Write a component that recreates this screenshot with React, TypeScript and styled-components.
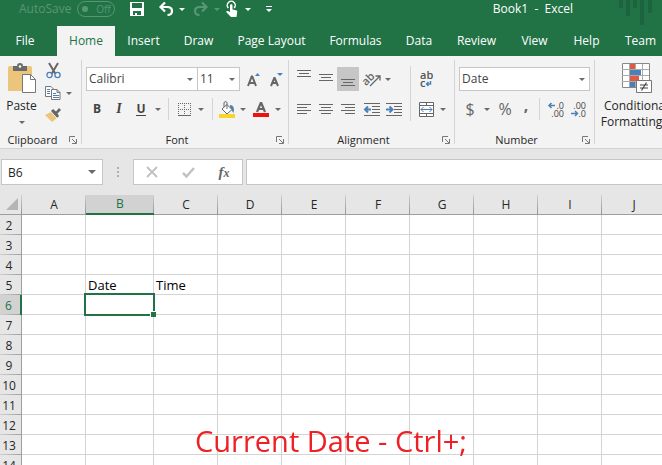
import React from "react";
import styled, { createGlobalStyle } from "styled-components";

const GREEN = "#217346";
const INK = "#262626";
const ICON = "#6a6a6a";
const BLUE = "#4a82b8";

const GlobalStyle = createGlobalStyle`
  *, *::before, *::after { box-sizing: border-box; }
  html, body { margin: 0; height: 100%; overflow: hidden; }
  body, button, input, select {
    font-family: "Open Sans", "Noto Sans", sans-serif;
    font-size: 12px;
    line-height: 16px;
    color: ${INK};
  }
  button {
    display: inline-flex;
    align-items: center;
    justify-content: center;
    padding: 0;
    border: 0;
    background: none;
  }
  svg { display: block; flex: none; overflow: visible; }
`;

const Window = styled.div`
  display: flex;
  flex-direction: column;
  height: 100vh;
  overflow: hidden;
  background: #fff;
`;

/* ---------- title bar ---------- */

const TitleBar = styled.header`
  display: flex;
  flex: none;
  height: 26px;
  padding-left: 19px;
  background: ${GREEN};
  color: #fff;
`;

const TitleTools = styled.div`
  display: flex;
  align-items: center;
  height: 18px;
`;

const AutoSave = styled.label`
  display: flex;
  align-items: center;
  gap: 6px;
  width: 107px;
  color: #5a9673;
`;

const Toggle = styled.button`
  gap: 8px;
  width: 38px;
  height: 16px;
  border: 1px solid #5a9673;
  border-radius: 8px;
  color: #5a9673;
  font-size: 10px;

  &::before {
    content: "";
    width: 6px;
    height: 6px;
    border-radius: 50%;
    background: #5a9673;
  }
`;

const ToolButton = styled.button<{ $w?: number; $active?: boolean; $bold?: boolean }>`
  flex: none;
  width: ${(p) => p.$w ?? 22}px;
  height: 24px;
  background: ${(p) => (p.$active ? "#c6c6c6" : "none")};
  color: #444;
  font-weight: ${(p) => (p.$bold ? 700 : 400)};
`;

const Title = styled.h1`
  flex: 1;
  margin: 0 45px 0 0;
  font-size: 12px;
  font-weight: 400;
  line-height: 18px;
  text-align: right;
  white-space: pre;
`;

/* ---------- tabs ---------- */

const Tabs = styled.nav`
  display: flex;
  flex: none;
  height: 30px;
  overflow: hidden;
  background: ${GREEN};
`;

const Tab = styled.button<{ $w: number; $active?: boolean; $first?: boolean }>`
  flex: none;
  width: ${(p) => p.$w}px;
  margin-right: ${(p) => (p.$first ? 7 : 0)}px;
  background: ${(p) => (p.$active ? "#f3f3f3" : "transparent")};
  color: ${(p) => (p.$active ? GREEN : "#fff")};
  white-space: nowrap;
`;

/* ---------- ribbon ---------- */

const Ribbon = styled.div`
  display: flex;
  flex: none;
  height: 93px;
  padding-top: 4px;
  overflow: hidden;
  border-bottom: 1px solid #d2d2d2;
  background: #f3f3f3;
`;

const Group = styled.section<{ $w: number }>`
  display: flex;
  flex: none;
  flex-direction: column;
  justify-content: space-between;
  width: ${(p) => p.$w}px;
`;

const Divider = styled.span`
  flex: none;
  width: 1px;
  height: 84px;
  background: #d4d4d4;
`;

const GroupBody = styled.div<{ $stack?: boolean }>`
  display: flex;
  flex-direction: ${(p) => (p.$stack ? "column" : "row")};
  gap: ${(p) => (p.$stack ? 6 : 0)}px;
  padding: ${(p) => (p.$stack ? "7px 4px 0" : "0")};
`;

const GroupFooter = styled.footer`
  display: grid;
  grid-template-columns: 1fr 16px;
  align-items: center;
  height: 16px;
`;

const GroupTitle = styled.h2`
  margin: 0;
  font-size: 11px;
  font-weight: 400;
  line-height: 16px;
  text-align: center;
`;

const Launcher = styled.button`
  height: 16px;
`;

const Row = styled.div`
  display: flex;
  align-items: center;
  height: 24px;
`;

const BigButton = styled.button<{ $w: number }>`
  flex: none;
  flex-direction: column;
  justify-content: flex-start;
  width: ${(p) => p.$w}px;
  height: 70px;
  padding-top: 3px;
  white-space: nowrap;

  & > svg { margin-bottom: 4px; }
`;

const ButtonLine = styled.span`
  display: flex;
  align-items: center;
  gap: 3px;
  height: 16px;
`;

const SmallButtons = styled.div`
  display: flex;
  flex-direction: column;
  padding-left: 2px;
`;

const SmallRow = styled.div`
  display: flex;
  height: 22px;

  & > button { height: 22px; }
`;

const Separator = styled.span<{ $gap: number }>`
  flex: none;
  width: 1px;
  height: 22px;
  margin: 0 ${(p) => p.$gap}px;
  background: #d4d4d4;
`;

const TallSeparator = styled.span`
  flex: none;
  width: 1px;
  height: 55px;
  margin: 6px 0 0 3px;
  background: #d4d4d4;
`;

const Combo = styled.label<{ $w: number; $joined?: boolean }>`
  display: grid;
  flex: none;
  align-items: center;
  width: ${(p) => p.$w}px;
  height: 24px;
  margin-left: ${(p) => (p.$joined ? -1 : 0)}px;
  border: 1px solid #c6c6c6;
  background: #fff;

  & > * { grid-area: 1 / 1; }
  & > svg {
    justify-self: end;
    margin-right: 4px;
    pointer-events: none;
  }
`;

const Select = styled.select`
  width: 100%;
  height: 22px;
  padding: 0 2px;
  border: 0;
  appearance: none;
  background: transparent;
  color: #444;
`;

const Underlined = styled.span`
  border-bottom: 1px solid #444;
  line-height: 13px;
`;

const Italic = styled.span`
  font-family: "Liberation Serif", serif;
  font-size: 14px;
  font-style: italic;
`;

const Sign = styled.span<{ $raised?: boolean }>`
  padding-bottom: ${(p) => (p.$raised ? 8 : 0)}px;
  color: #666;
  font-size: 16px;
`;

/* ---------- formula bar ---------- */

const FormulaBar = styled.div`
  display: flex;
  flex: none;
  align-items: center;
  height: 46px;
  padding-left: 1px;
  background: #e6e6e6;
`;

const BarBox = styled.div<{ $w?: number }>`
  display: flex;
  flex: ${(p) => (p.$w ? "none" : "1")};
  align-items: center;
  width: ${(p) => (p.$w ? `${p.$w}px` : "auto")};
  height: 26px;
  border: 1px solid #c6c6c6;
  background: #fff;
`;

const FormulaBox = styled(BarBox)`
  border-right: 0;
`;

const BarInput = styled.input`
  flex: 1;
  min-width: 0;
  height: 24px;
  padding: 0 6px;
  border: 0;
  outline: 0;
  background: transparent;
`;

const Grip = styled.span`
  display: flex;
  flex: none;
  flex-direction: column;
  align-items: center;
  gap: 2px;
  width: 30px;

  & > i {
    width: 2px;
    height: 2px;
    background: #b0b0b0;
  }
`;

const Gap = styled.span<{ $w: number }>`
  flex: none;
  width: ${(p) => p.$w}px;
`;

const FxLabel = styled.span`
  color: #666;
  font-family: "Liberation Serif", serif;
  font-size: 15px;
  font-style: italic;
  font-weight: 700;

  & > small { font-size: 12px; }
`;

/* ---------- sheet ---------- */

const SheetArea = styled.main`
  flex: 1;
  min-height: 0;
  overflow: hidden;
`;

const Sheet = styled.table`
  width: 666px;
  table-layout: fixed;
  border-collapse: separate;
  border-spacing: 0;
  font-size: 13px;
`;

const Col = styled.col<{ $w: number }>`
  width: ${(p) => p.$w}px;
`;

const Corner = styled.td`
  height: 20px;
  padding: 0 4px 2px 0;
  border-bottom: 1px solid #9b9f9e;
  background: linear-gradient(#d0d0d0, #8f9795) right / 1px 100% no-repeat #e6e6e6;

  & > svg { margin-left: auto; }
`;

const ColumnHead = styled.th<{ $active: boolean }>`
  height: 20px;
  padding: 0;
  border-bottom: ${(p) => (p.$active ? `2px solid ${GREEN}` : "1px solid #9b9f9e")};
  background: linear-gradient(#d0d0d0, #8f9795) right / 1px 100% no-repeat
    ${(p) => (p.$active ? "#d2d2d2" : "#e6e6e6")};
  color: ${(p) => (p.$active ? GREEN : INK)};
  font-size: 12px;
  font-weight: 400;
  line-height: 16px;
`;

const RowHead = styled.th<{ $active: boolean }>`
  height: 20px;
  padding: 2px 3px 0 0;
  border-right: ${(p) => (p.$active ? `2px solid ${GREEN}` : "1px solid #9b9f9e")};
  background: linear-gradient(90deg, #d0d0d0, #9b9f9e) bottom / 100% 1px no-repeat
    ${(p) => (p.$active ? "#d2d2d2" : "#e6e6e6")};
  color: ${(p) => (p.$active ? GREEN : INK)};
  font-size: 12px;
  font-weight: 400;
  line-height: 16px;
`;

const Cell = styled.td`
  position: relative;
  height: 20px;
  padding: 0 2px;
  border-right: 1px solid #d4d4d4;
  border-bottom: 1px solid #d4d4d4;
  color: #000;
  line-height: 18px;
  white-space: nowrap;
`;

const Selection = styled.span`
  position: absolute;
  z-index: 1;
  inset: -2px;
  border: 2px solid ${GREEN};

  &::after {
    content: "";
    position: absolute;
    right: -3px;
    bottom: -3px;
    width: 6px;
    height: 6px;
    border: solid #fff;
    border-width: 1px 0 0 1px;
    background: ${GREEN};
  }
`;

const Caption = styled.p`
  position: fixed;
  z-index: 2;
  right: 0;
  bottom: 4px;
  left: 0;
  margin: 0;
  color: #ed2024;
  font-size: 29px;
  line-height: 40px;
  text-align: center;
`;

/* ---------- icons ---------- */

const Caret = ({ color = ICON, w = 6, h = 3 }: { color?: string; w?: number; h?: number }) => (
  <svg width={w} height={h} viewBox="0 0 6 3" preserveAspectRatio="none" fill={color}>
    <path d="M0 0h6L3 3z" />
  </svg>
);

const SaveIcon = () => (
  <svg width="14" height="14" viewBox="0 0 14 14">
    <path fill="#fff" fillRule="evenodd" d="M0 0h14v14H0zM2 1v5h10V1zM3 9v4h2v-2h2v2h4V9z" />
  </svg>
);

const UndoIcon = ({ redo = false }: { redo?: boolean }) => (
  <svg width="14" height="14" viewBox="0 0 14 14" fill="none" stroke={redo ? "#5a9673" : "#fff"} strokeWidth="2.200">
    <g transform={redo ? "translate(14 0) scale(-1 1)" : undefined}>
      <path d="M6 .5 1.500 5 6 9.500M2 5h6c3.200 0 5 1.500 5 4s-1.800 4-4.500 4" />
    </g>
  </svg>
);

const TouchIcon = () => (
  <svg width="12" height="16" viewBox="0 0 12 16">
    <path d="M2.300 7A4 4 0 1 1 8.200 7" fill="none" stroke="#fff" strokeWidth="1.500" />
    <path fill="#fff" d="M4 4.500c0-1.600 2.500-1.600 2.500 0v4L10 9.300c1 .3 1.400 1 1.200 2L10.500 16H5L.4 11.300c-.5-1 .5-1.700 1.400-1.200L4 11z" />
  </svg>
);

const CustomizeIcon = () => (
  <svg width="6" height="7" viewBox="0 0 6 7" fill="#fff">
    <path d="M0 0h6v1H0zM0 3h6L3 6z" />
  </svg>
);

const TitleArt = () => (
  <svg width="44" height="26" viewBox="0 0 44 26" fill="#1c6340" shapeRendering="crispEdges">
    <path d="M1 0h4v8H1zM8 0h4v16H8zM15 0h4v8h-4zM22 0h4v25h-4zM30 0h4v13h-4z" />
  </svg>
);

const PasteIcon = () => (
  <svg width="28" height="31" viewBox="0 0 28 31">
    <path fill="#ebc57c" d="M2 3h20q2 0 2 2v23H0V5q0-2 2-2z" />
    <path fill="#6a6a6a" d="M5 3h4q0-3 3-3t3 3h4v5H5z" />
    <circle cx="12" cy="3.500" r="1.300" fill="#fff" />
    <path fill="#fff" stroke="#777" d="M14.500 11.500h8l5 5v13h-13z" />
    <path fill="none" stroke="#777" d="M22.500 11.500v5h5" />
  </svg>
);

const CutIcon = () => (
  <svg width="15" height="16" viewBox="0 0 15 16" fill="none">
    <path d="m3 0 6.500 11M12 0 5.500 11" stroke="#666" strokeWidth="2" />
    <circle cx="3.500" cy="12" r="2.600" stroke={BLUE} strokeWidth="1.300" />
    <circle cx="11.500" cy="12" r="2.600" stroke={BLUE} strokeWidth="1.300" />
  </svg>
);

const CopyIcon = () => (
  <svg width="16" height="14" viewBox="0 0 16 14">
    <path fill="#fff" stroke="#777" d="M.5.5H6L8.500 3v7.500h-8z" />
    <path stroke={BLUE} d="M2 3.500h3M2 5.500h3M2 7.500h3" />
    <path fill="#fff" stroke="#777" d="M6.500 3.500h5.500l3 3v7H6.500z" />
    <path fill="none" stroke="#777" d="M12 3.500v3h3" />
    <path stroke={BLUE} d="M8 7.500h3M8 9.500h6M8 11.500h6" />
  </svg>
);

const BrushIcon = () => (
  <svg width="16" height="14" viewBox="0 0 16 14">
    <path fill="#ebc57c" d="M0 7 6 4l6 6-5 4z" />
    <path fill="#666" d="m6 3 2-2 3 2.500L14 0l2 2-3.500 3.500L14 8l-2 2z" />
    <path stroke="#f3f3f3" d="m6 4 6 6" />
  </svg>
);

const LauncherIcon = () => (
  <svg width="8" height="8" viewBox="0 0 8 8" fill="none" stroke="#777">
    <path d="M.5 6V.5H6M3 3l4 4M7.500 3v4.500H3" />
  </svg>
);

const FontSizeIcon = ({ down = false }: { down?: boolean }) => (
  <svg width="13" height="15" viewBox="0 0 13 15" fill="none">
    <path
      d={down ? "m1 14 3.300-8h.4L8 14M2.500 11h4" : "M1 14 4.700 4.500h.6L9 14M2.500 11h5"}
      stroke="#666"
      strokeWidth="2"
    />
    <path fill={BLUE} d={down ? "M7 1h6l-3 3z" : "M8 4h5l-2.500-3z"} />
  </svg>
);

const BordersIcon = () => (
  <svg width="13" height="13" viewBox="0 0 13 13" fill="none" stroke="#666" shapeRendering="crispEdges">
    <path strokeDasharray="1 1" d="M0 .5h13M0 6.500h13M.5 0v12M6.500 0v12M12.500 0v12" />
    <path d="M0 12.500h13" />
  </svg>
);

const FillIcon = () => (
  <svg width="16" height="17" viewBox="0 0 16 17">
    <path fill={BLUE} d="M11 4c4 0 4.500 4 3.500 8-1-1-2-4-3.500-4z" />
    <path fill="#fff" stroke="#666" d="m8 3.500 5 5-5 4.500-5-5z" />
    <path fill="none" stroke="#666" d="M5 6V1.500q2-2 3 0V8" />
    <path fill="#f8d42c" d="M0 13h16v4H0z" />
  </svg>
);

const FontColorIcon = () => (
  <svg width="16" height="16" viewBox="0 0 16 16">
    <path fill="none" stroke="#666" strokeWidth="2.200" d="M4 11 7.700 2h.6L12 11M5.500 8h5" />
    <path fill="#f01010" d="M0 12h16v4H0z" />
  </svg>
);

/* Each entry is one stroke of the icon: [x, y, length]. */
type Stroke = [number, number, number];

const LinesIcon = ({ strokes }: { strokes: Stroke[] }) => (
  <svg width="14" height="18" viewBox="0 0 14 18" fill="#666" shapeRendering="crispEdges">
    {strokes.map(([x, y, w]) => (
      <rect key={y} x={x} y={y} width={w} height="1" />
    ))}
  </svg>
);

const ALIGN_TOP: Stroke[] = [[0, 0, 14], [2, 3, 10], [0, 6, 14]];
const ALIGN_MIDDLE: Stroke[] = [[0, 4, 14], [2, 7, 10], [0, 10, 14]];
const ALIGN_BOTTOM: Stroke[] = [[0, 9, 14], [2, 12, 10], [0, 15, 14]];
const ALIGN_LEFT: Stroke[] = [[0, 4, 14], [0, 7, 10], [0, 10, 14], [0, 13, 10]];
const ALIGN_CENTER: Stroke[] = [[0, 4, 14], [2, 7, 10], [0, 10, 14], [2, 13, 10]];
const ALIGN_RIGHT: Stroke[] = [[0, 4, 14], [4, 7, 10], [0, 10, 14], [4, 13, 10]];

const IndentIcon = ({ right = false }: { right?: boolean }) => (
  <svg width="16" height="13" viewBox="0 0 16 13">
    <path stroke="#666" shapeRendering="crispEdges" d="M0 .5h16M8 3.500h8M8 6.500h8M8 9.500h8M0 12.500h16" />
    <path
      fill="none"
      stroke={BLUE}
      strokeWidth="2"
      d={right ? "M0 6.500h6M3.500 3.500l3 3-3 3" : "M7 6.500H1M4 3.500l-3 3 3 3"}
    />
  </svg>
);

const OrientationIcon = () => (
  <svg width="17" height="16" viewBox="0 0 17 16">
    <text x="-2" y="12" transform="rotate(-45 4 9)" fontSize="11" fontWeight="600" fill="#666">ab</text>
    <path fill="none" stroke="#666" strokeWidth="1.300" d="M6 15 15.500 5.500M11.500 5H16v4.500" />
  </svg>
);

const WrapIcon = () => (
  <svg width="14" height="17" viewBox="0 0 14 17">
    <text x="1" y="8" fontSize="11" fontWeight="600" fill="#555">ab</text>
    <text x="1" y="16" fontSize="11" fontWeight="600" fill="#555">c</text>
    <path fill="none" stroke={BLUE} strokeWidth="1.500" d="M11.500 10v3H8M9.500 11l-2 2 2 2" />
  </svg>
);

const MergeIcon = () => (
  <svg width="15" height="15" viewBox="0 0 15 15">
    <path fill="#fff" stroke="#666" d="M.5.5h14v14H.5zM.5 3.500h14M.5 11.500h14M7.500.5v3M7.500 11.500v3" />
    <path fill="none" stroke={BLUE} d="M2 7.500h11M4.500 5 2 7.500 4.500 10M10.500 5 13 7.500 10.500 10" />
  </svg>
);

const DecimalIcon = ({ decrease = false }: { decrease?: boolean }) => (
  <svg width="17" height="15" viewBox="0 0 17 15" fontSize="9" fill="#444">
    <text x="16" y="7" textAnchor="end">{decrease ? ".00" : ".0"}</text>
    <text x="16" y="15" textAnchor="end">{decrease ? ".0" : ".00"}</text>
    <path
      fill="none"
      stroke={BLUE}
      strokeWidth="1.500"
      d={decrease ? "M1 11.500h6M5 9l2.500 2.500L5 14" : "M7 3.500H1M3.500 1 1 3.500 3.500 6"}
    />
  </svg>
);

const ConditionalIcon = () => (
  <svg width="31" height="31" viewBox="0 0 31 31">
    <path fill="#fff" stroke="#888" d="M1.500.5h27v24h-27z" />
    <path fill="none" stroke="#aaa" d="M8.500 1v23M14.500 1v23M21.500 1v23M1 6.500h27M1 12.500h27M1 18.500h27" />
    <path fill="#e05a43" d="M9 1h5v5H9zM9 13h9v5H9z" />
    <path fill={BLUE} d="M9 7h11v5H9zM9 19h5v5H9z" />
    <path fill="#fff" stroke="#777" d="M15.500 17.500h15v12h-15z" />
    <path stroke="#444" strokeWidth="1.200" d="M19 22h8M19 25h8M25.500 19.500l-5 8" />
  </svg>
);

const CancelIcon = () => (
  <svg width="12" height="10" viewBox="0 0 12 10" fill="none" stroke="#c2c2c2" strokeWidth="2">
    <path d="m1 0 10 10M11 0 1 10" />
  </svg>
);

const EnterIcon = () => (
  <svg width="13" height="11" viewBox="0 0 13 11" fill="none" stroke="#c2c2c2" strokeWidth="2.500">
    <path d="m1 6 3.500 3.500L12 1" />
  </svg>
);

/* ---------- data ---------- */

const TABS: [string, number][] = [
  ["File", 50],
  ["Home", 58],
  ["Insert", 57],
  ["Draw", 53],
  ["Page Layout", 93],
  ["Formulas", 75],
  ["Data", 52],
  ["Review", 63],
  ["View", 53],
  ["Help", 51],
  ["Team", 57],
];

const COLUMNS = ["A", "B", "C", "D", "E", "F", "G", "H", "I", "J"];
const ROWS = [2, 3, 4, 5, 6, 7, 8, 9, 10, 11, 12, 13, 14];
const CELLS: Record<string, string> = { B5: "Date", C5: "Time" };
const ACTIVE = { column: "B", row: 6 };

const Footer = ({ title }: { title: string }) => (
  <GroupFooter>
    <GroupTitle>{title}</GroupTitle>
    <Launcher aria-label={`${title} settings`}>
      <LauncherIcon />
    </Launcher>
  </GroupFooter>
);

export default function App() {
  return (
    <Window>
      <GlobalStyle />
      <TitleBar>
        <TitleTools>
          <AutoSave>
            AutoSave
            <Toggle role="switch" aria-checked="false">Off</Toggle>
          </AutoSave>
          <ToolButton aria-label="Save"><SaveIcon /></ToolButton>
          <Gap $w={6} />
          <ToolButton $w={24} aria-label="Undo"><UndoIcon /></ToolButton>
          <ToolButton $w={8} aria-label="Undo list"><Caret color="#fff" /></ToolButton>
          <Gap $w={3} />
          <ToolButton $w={24} aria-label="Redo"><UndoIcon redo /></ToolButton>
          <ToolButton $w={8} aria-label="Redo list"><Caret color="#5a9673" /></ToolButton>
          <ToolButton $w={22} aria-label="Touch mode"><TouchIcon /></ToolButton>
          <ToolButton $w={10} aria-label="Touch mode list"><Caret color="#fff" /></ToolButton>
          <Gap $w={6} />
          <ToolButton $w={20} aria-label="Customize toolbar"><CustomizeIcon /></ToolButton>
        </TitleTools>
        <Title>{"Book1  -  Excel"}</Title>
        <TitleArt />
      </TitleBar>

      <Tabs aria-label="Ribbon tabs">
        {TABS.map(([name, w], i) => (
          <Tab key={name} $w={w} $first={i === 0} $active={name === "Home"}>{name}</Tab>
        ))}
      </Tabs>

      <Ribbon>
        <Group $w={81}>
          <GroupBody>
            <BigButton $w={43}>
              <PasteIcon />
              <ButtonLine>Paste</ButtonLine>
              <ButtonLine><Caret /></ButtonLine>
            </BigButton>
            <SmallButtons>
              <SmallRow><ToolButton $w={16} aria-label="Cut"><CutIcon /></ToolButton></SmallRow>
              <SmallRow>
                <ToolButton $w={16} aria-label="Copy"><CopyIcon /></ToolButton>
                <ToolButton $w={16} aria-label="Copy options"><Caret /></ToolButton>
              </SmallRow>
              <SmallRow><ToolButton $w={16} aria-label="Format painter"><BrushIcon /></ToolButton></SmallRow>
            </SmallButtons>
          </GroupBody>
          <Footer title="Clipboard" />
        </Group>
        <Divider />

        <Group $w={206}>
          <GroupBody $stack>
            <Row>
              <Combo $w={112}>
                <Select aria-label="Font"><option>Calibri</option></Select>
                <Caret />
              </Combo>
              <Combo $w={43} $joined>
                <Select aria-label="Font size"><option>11</option></Select>
                <Caret />
              </Combo>
              <ToolButton $w={26} aria-label="Increase font size"><FontSizeIcon /></ToolButton>
              <ToolButton $w={20} aria-label="Decrease font size"><FontSizeIcon down /></ToolButton>
            </Row>
            <Row>
              <ToolButton $bold>B</ToolButton>
              <ToolButton $bold><Italic>I</Italic></ToolButton>
              <ToolButton $bold><Underlined>U</Underlined></ToolButton>
              <ToolButton $w={11} aria-label="Underline options"><Caret /></ToolButton>
              <Separator $gap={5} />
              <ToolButton $w={20} aria-label="Borders"><BordersIcon /></ToolButton>
              <ToolButton $w={13} aria-label="Border options"><Caret /></ToolButton>
              <Separator $gap={5} />
              <ToolButton $w={18} aria-label="Fill color"><FillIcon /></ToolButton>
              <ToolButton $w={14} aria-label="Fill color options"><Caret /></ToolButton>
              <ToolButton $w={22} aria-label="Font color"><FontColorIcon /></ToolButton>
              <ToolButton $w={11} aria-label="Font color options"><Caret /></ToolButton>
            </Row>
          </GroupBody>
          <Footer title="Font" />
        </Group>
        <Divider />

        <Group $w={165}>
          <GroupBody>
            <GroupBody $stack>
              <Row>
                <ToolButton aria-label="Top align"><LinesIcon strokes={ALIGN_TOP} /></ToolButton>
                <ToolButton aria-label="Middle align"><LinesIcon strokes={ALIGN_MIDDLE} /></ToolButton>
                <ToolButton $active aria-label="Bottom align"><LinesIcon strokes={ALIGN_BOTTOM} /></ToolButton>
                <ToolButton $w={26} aria-label="Orientation"><OrientationIcon /></ToolButton>
                <ToolButton $w={6} aria-label="Orientation options"><Caret /></ToolButton>
              </Row>
              <Row>
                <ToolButton aria-label="Align left"><LinesIcon strokes={ALIGN_LEFT} /></ToolButton>
                <ToolButton aria-label="Center"><LinesIcon strokes={ALIGN_CENTER} /></ToolButton>
                <ToolButton aria-label="Align right"><LinesIcon strokes={ALIGN_RIGHT} /></ToolButton>
                <ToolButton $w={26} aria-label="Decrease indent"><IndentIcon /></ToolButton>
                <ToolButton $w={18} aria-label="Increase indent"><IndentIcon right /></ToolButton>
              </Row>
            </GroupBody>
            <TallSeparator />
            <GroupBody $stack>
              <Row><ToolButton aria-label="Wrap text"><WrapIcon /></ToolButton></Row>
              <Row>
                <ToolButton aria-label="Merge and center"><MergeIcon /></ToolButton>
                <ToolButton $w={11} aria-label="Merge options"><Caret /></ToolButton>
              </Row>
            </GroupBody>
          </GroupBody>
          <Footer title="Alignment" />
        </Group>
        <Divider />

        <Group $w={139}>
          <GroupBody $stack>
            <Row>
              <Combo $w={131}>
                <Select aria-label="Number format"><option>Date</option></Select>
                <Caret />
              </Combo>
            </Row>
            <Row>
              <ToolButton><Sign>$</Sign></ToolButton>
              <ToolButton $w={11} aria-label="Currency options"><Caret /></ToolButton>
              <ToolButton $w={26}><Sign>%</Sign></ToolButton>
              <ToolButton $w={16} $bold><Sign $raised>,</Sign></ToolButton>
              <Separator $gap={5} />
              <ToolButton aria-label="Increase decimal"><DecimalIcon /></ToolButton>
              <ToolButton aria-label="Decrease decimal"><DecimalIcon decrease /></ToolButton>
            </Row>
          </GroupBody>
          <Footer title="Number" />
        </Group>
        <Divider />

        <BigButton $w={82}>
          <ConditionalIcon />
          <ButtonLine>Conditional</ButtonLine>
          <ButtonLine>Formatting<Caret /></ButtonLine>
        </BigButton>
      </Ribbon>

      <FormulaBar>
        <BarBox $w={102}>
          <BarInput aria-label="Name box" defaultValue="B6" />
          <ToolButton $w={20} aria-label="Name list"><Caret w={8} h={4} /></ToolButton>
        </BarBox>
        <Grip><i /><i /><i /></Grip>
        <BarBox $w={110}>
          <ToolButton $w={36} aria-label="Cancel"><CancelIcon /></ToolButton>
          <ToolButton $w={36} aria-label="Enter"><EnterIcon /></ToolButton>
          <ToolButton $w={36} aria-label="Insert function"><FxLabel>f<small>x</small></FxLabel></ToolButton>
        </BarBox>
        <Gap $w={3} />
        <FormulaBox>
          <BarInput aria-label="Formula" />
        </FormulaBox>
      </FormulaBar>

      <SheetArea>
        <Sheet>
          <colgroup>
            <Col $w={22} />
            {COLUMNS.map((c) => <Col key={c} $w={c === "B" ? 68 : 64} />)}
          </colgroup>
          <thead>
            <tr>
              <Corner>
                <svg width="12" height="12" viewBox="0 0 12 12" fill="#b2b6b4"><path d="M12 0v12H0z" /></svg>
              </Corner>
              {COLUMNS.map((c) => (
                <ColumnHead key={c} scope="col" $active={c === ACTIVE.column}>{c}</ColumnHead>
              ))}
            </tr>
          </thead>
          <tbody>
            {ROWS.map((r) => (
              <tr key={r}>
                <RowHead scope="row" $active={r === ACTIVE.row}>{r}</RowHead>
                {COLUMNS.map((c) => (
                  <Cell key={c}>
                    {CELLS[`${c}${r}`]}
                    {c === ACTIVE.column && r === ACTIVE.row && <Selection />}
                  </Cell>
                ))}
              </tr>
            ))}
          </tbody>
        </Sheet>
      </SheetArea>
      <Caption>Current Date - Ctrl+;</Caption>
    </Window>
  );
}
